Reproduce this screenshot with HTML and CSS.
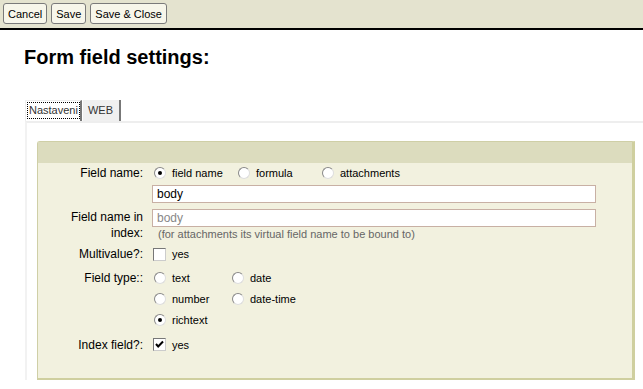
FILE: index.html
```html
<!DOCTYPE html>
<html>
<head>
    <title>Form field settings</title>
    <link rel="stylesheet" href="styles.css">
</head>
<body>
    <div class="toolbar">
        <button class="btn">Cancel</button>
        <button class="btn">Save</button>
        <button class="btn">Save &amp; Close</button>
    </div>
    <div class="page">
        <h1>Form field settings:</h1>
        <div class="tabs">
            <div class="tab active"><span class="focus">Nastaveni</span></div>
            <div class="tab">WEB</div>
        </div>
        <div class="tab-body">
            <div class="panel">
                <div class="panel-head"></div>
                <table class="form">
                    <tr class="row-name">
                        <td class="label">Field name:</td>
                        <td>
                            <div class="options">
                                <span class="opt w84"><span class="radio on"></span>field name</span>
                                <span class="opt w84"><span class="radio"></span>formula</span>
                                <span class="opt"><span class="radio"></span>attachments</span>
                            </div>
                            <div class="input">body</div>
                        </td>
                    </tr>
                    <tr class="row-index">
                        <td class="label">Field name in index:</td>
                        <td>
                            <div class="input muted">body</div>
                            <div class="hint">(for attachments its virtual field name to be bound to)</div>
                        </td>
                    </tr>
                    <tr class="row-multi">
                        <td class="label">Multivalue?:</td>
                        <td><span class="opt"><span class="check"></span>yes</span></td>
                    </tr>
                    <tr class="row-type">
                        <td class="label">Field type::</td>
                        <td>
                            <div class="grid">
                                <span class="opt"><span class="radio"></span>text</span>
                                <span class="opt"><span class="radio"></span>date</span>
                                <span class="opt"><span class="radio"></span>number</span>
                                <span class="opt"><span class="radio"></span>date-time</span>
                                <span class="opt"><span class="radio on"></span>richtext</span>
                            </div>
                        </td>
                    </tr>
                    <tr class="row-indexed">
                        <td class="label">Index field?:</td>
                        <td><span class="opt"><span class="check"><svg width="9" height="9" viewBox="0 0 9 9"><path d="M1 4 L3.2 6.5 L8 1.5" fill="none" stroke="#000" stroke-width="2"/></svg></span>yes</span></td>
                    </tr>
                </table>
            </div>
        </div>
    </div>
</body>
</html>
```
FILE: styles.css
```css
body {
    margin: 0;
    font-family: "Liberation Sans", Arial, sans-serif;
    font-size: 12px;
    color: #000;
    background: #fff;
}
.toolbar {
    height: 30px;
    background: #e4e3cf;
    border-bottom: 2px solid #000;
    padding: 3px 0 0 3px;
    box-sizing: border-box;
    display: flex;
    gap: 4px;
    align-items: flex-start;
}
.btn {
    font-family: "Liberation Sans", Arial, sans-serif;
    font-size: 11px;
    height: 21px;
    padding: 0 4px;
    background: #f7f6ea;
    border: 1px solid #7a7a7a;
    border-radius: 3px;
    color: #000;
}
.page {
    padding: 0 0 0 25px;
}
h1 {
    margin: 15px 0 0 -1px;
    font-size: 20px;
    line-height: 24px;
    font-weight: bold;
}
.tabs {
    display: flex;
    margin-top: 31px;
    gap: 1px;
}
.tab {
    height: 21px;
    line-height: 20px;
    padding: 0 6px 0 5px;
    font-size: 11px;
    color: #333;
    background: #f0f0f0;
    border-right: 2px solid #777;
    box-sizing: border-box;
}
.tab.active {
    background: #fff;
    border: 1px solid #eee;
    border-bottom: none;
    border-right: 2px solid #777;
    padding: 1px 0 0 1px;
    line-height: 15px;
}
.focus {
    display: inline-block;
    border: 1px dotted #000;
    padding: 0 1px;
}
.tab-body {
    border-top: 2px solid #eee;
    border-left: 2px solid #f2f2f2;
    padding: 18px 8px 0 10px;
}
.panel {
    background: #f2f1df;
    border: 1px solid #cfcfa6;
    border-right: 3px solid #cfcf9f;
    border-bottom: 2px solid #cfcf9f;
    border-radius: 3px 0 0 0;
    padding-bottom: 25px;
}
.panel-head {
    height: 21px;
    background: #dcdcbe;
}
.form {
    border-collapse: collapse;
}
.form td {
    padding: 0;
    vertical-align: top;
}
.row-name td {
    padding-top: 2px;
}
.row-index td {
    padding-top: 6px;
}
.row-multi td {
    padding-top: 5px;
}
.row-type td {
    padding-top: 6px;
}
.row-indexed td {
    padding-top: 9px;
}
.label {
    width: 105px;
    text-align: right;
    padding-right: 10px !important;
    font-size: 12px;
    line-height: 16px;
}
.options {
    display: flex;
    height: 16px;
}
.opt {
    display: inline-flex;
    align-items: center;
    font-size: 11px;
    height: 16px;
}
.w84 {
    width: 84px;
}
.radio {
    width: 10px;
    height: 10px;
    border-radius: 50%;
    background: #fff;
    border: 1px solid #888;
    border-right-color: #ddd;
    border-bottom-color: #ddd;
    margin: 0 6px 0 1px;
    position: relative;
}
.radio.on::after {
    content: "";
    position: absolute;
    left: 3px;
    top: 3px;
    width: 4px;
    height: 4px;
    border-radius: 50%;
    background: #000;
}
.check {
    width: 11px;
    height: 11px;
    background: #fff;
    border: 1px solid #777;
    border-right-color: #ccc;
    border-bottom-color: #ccc;
    margin: 0 6px 0 0;
    display: inline-flex;
    align-items: center;
    justify-content: center;
}
.input {
    width: 434px;
    height: 16px;
    line-height: 16px;
    border: 1px solid #c8b0a4;
    background: #fff;
    padding: 0 4px;
    margin: 4px 0 0 -1px;
    font-size: 12px;
}
.input.muted {
    color: #888;
    margin-top: 0;
}
.hint {
    font-size: 11px;
    color: #666;
    padding-left: 5px;
    line-height: 14px;
}
.grid {
    display: grid;
    grid-template-columns: 78px auto;
    row-gap: 5px;
}
```
